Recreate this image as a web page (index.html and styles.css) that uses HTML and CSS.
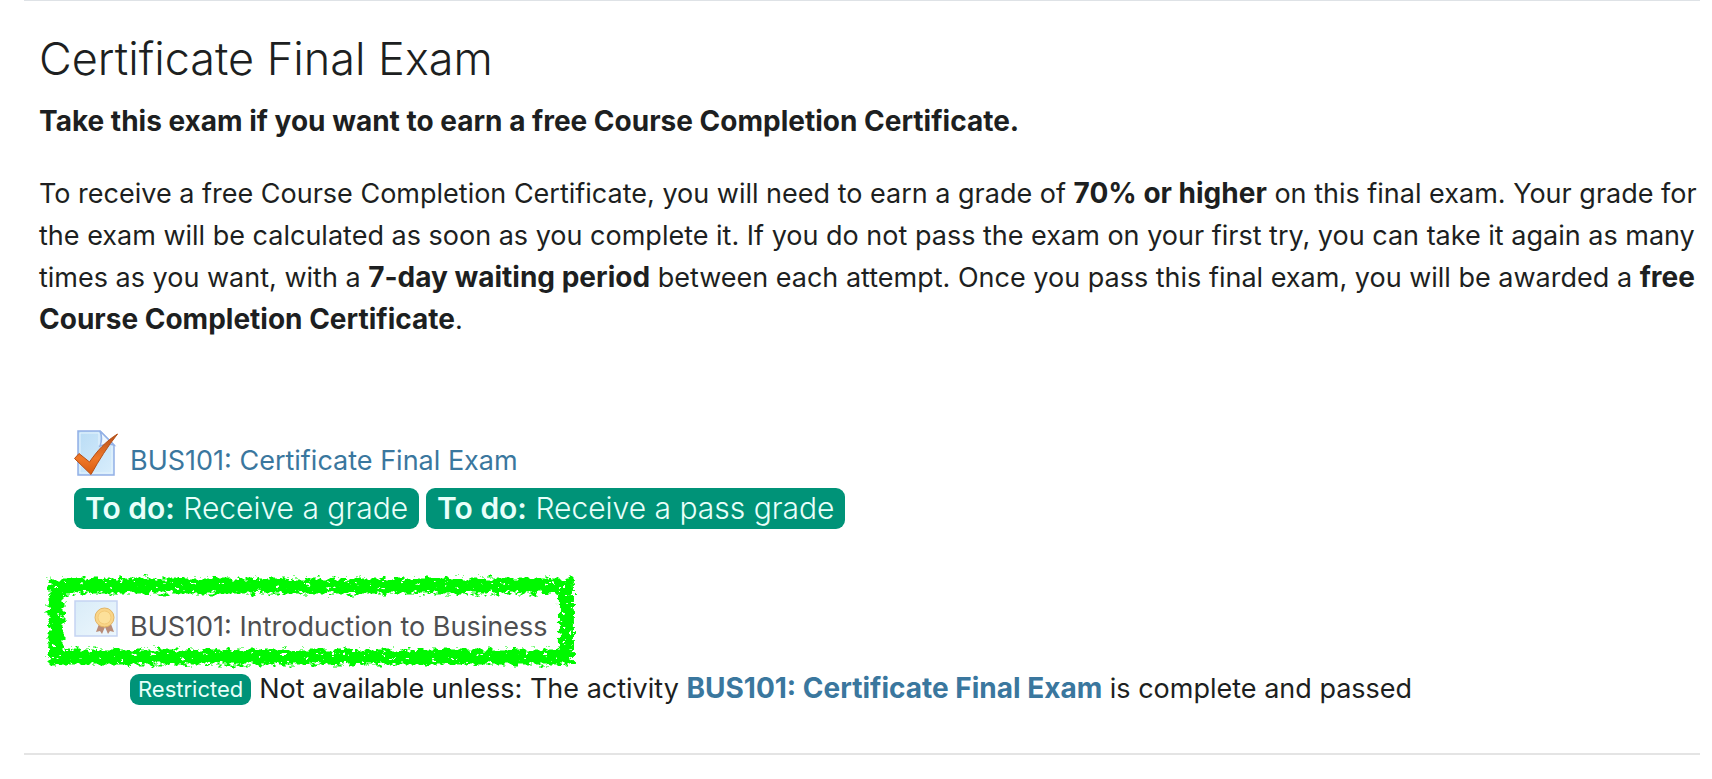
FILE: index.html
```
<!DOCTYPE html>
<html lang="en">
<head>
    <meta charset="UTF-8">
    <meta name="viewport" content="width=device-width, initial-scale=1.0">
    <title>Certificate Final Exam</title>
    <link rel="stylesheet" href="styles.css">
</head>
<body>
    <section class="section">
        <h2>Certificate Final Exam</h2>
        <p class="lead"><strong>Take this exam if you want to earn a free Course Completion Certificate.</strong></p>
        <p class="summary">To receive a free Course Completion Certificate, you will need to earn a grade of <strong>70% or higher</strong> on this final exam. Your grade for the exam will be calculated as soon as you complete it. If you do not pass the exam on your first try, you can take it again as many times as you want, with a <strong>7-day waiting period</strong> between each attempt. Once you pass this final exam, you will be awarded a <strong>free Course Completion Certificate</strong>.</p>

        <ul class="activities">
            <li class="activity">
                <div class="activity-row">
                    <svg class="icon" viewBox="0 0 44 48" aria-hidden="true">
                        <defs>
                            <linearGradient id="page" x1="0" y1="0" x2="1" y2="1">
                                <stop offset="0" stop-color="#b9dcf5"/>
                                <stop offset="1" stop-color="#d9eefc"/>
                            </linearGradient>
                            <linearGradient id="tick" x1="0" y1="0" x2="0" y2="1">
                                <stop offset="0" stop-color="#b5501c"/>
                                <stop offset="0.6" stop-color="#f07828"/>
                                <stop offset="1" stop-color="#d85a10"/>
                            </linearGradient>
                        </defs>
                        <path d="M4 2h22l14 14v30H4z" fill="url(#page)" stroke="#92b0e6" stroke-width="1.5"/>
                        <path d="M6 4h19v12h13v28H6z" fill="none" stroke="#e6f4fd"/>
                        <path d="M26 2c2 5 2 10 0 15 5-2 10-2 14-1z" fill="#eef7fe" stroke="#92b0e6" stroke-width="1.5"/>
                        <path d="M43.500 5C34 17 25 31 17 45.500L.5 29.500 5 24.500l10.500 8.500C23 22 32 12 43.500 5z" fill="url(#tick)" stroke="#b54f16" stroke-width="1"/>
                    </svg>
                    <a href="#">BUS101: Certificate Final Exam</a>
                </div>
                <div class="badges">
                    <span class="badge"><strong>To do:</strong> Receive a grade</span>
                    <span class="badge"><strong>To do:</strong> Receive a pass grade</span>
                </div>
            </li>
            <li class="activity">
                <div class="activity-row">
                    <svg class="icon" viewBox="0 0 44 48" aria-hidden="true">
                        <defs>
                            <linearGradient id="card" x1="0" y1="0" x2="1" y2="1">
                                <stop offset="0" stop-color="#d9ecf8"/>
                                <stop offset="1" stop-color="#edf7fd"/>
                            </linearGradient>
                        </defs>
                        <rect x="1" y="6" width="42" height="35" fill="url(#card)" stroke="#c5d3f2" stroke-width="1.5"/>
                        <path d="M25 29l-3 8 4-1 2 3 3-7 3 7 2-3 4 1-3-8z" fill="#b98c78"/>
                        <circle cx="30.500" cy="22.500" r="9.500" fill="#f9d588" stroke="#e3b565"/>
                        <circle cx="30.500" cy="22.500" r="6.500" fill="#fce09a" stroke="#f3ca78"/>
                    </svg>
                    <span class="dimmed">BUS101: Introduction to Business</span>
                    <svg class="marker" aria-hidden="true">
                        <filter id="rough" x="-5%" y="-20%" width="110%" height="140%">
                            <feTurbulence type="fractalNoise" baseFrequency="0.16 0.24" numOctaves="3" seed="4" result="noise"/>
                            <feDisplacementMap in="SourceGraphic" in2="noise" scale="12" xChannelSelector="R" yChannelSelector="G" result="edge"/>
                            <feColorMatrix in="noise" type="matrix" values="0 0 0 0 0  0 0 0 0 0  0 0 0 0 0  0 0 24 0 -17" result="specks"/>
                            <feComposite in="edge" in2="specks" operator="out"/>
                        </filter>
                        <rect x="0" y="0" width="100%" height="100%" filter="url(#rough)"/>
                    </svg>
                </div>
                <div class="restriction">
                    <span class="badge badge-small">Restricted</span>
                    <span>Not available unless: The activity <a href="#"><strong>BUS101: Certificate Final Exam</strong></a> is complete and passed</span>
                </div>
            </li>
        </ul>
    </section>
</body>
</html>
```
FILE: styles.css
```
body {
    margin: 0;
    background: #fff;
    color: #1d1f21;
    font-family: Inter, sans-serif;
    font-size: 27px;
    line-height: 42px;
}
a {
    color: #3a779e;
    text-decoration: none;
}
a:hover {
    text-decoration: underline;
}
strong {
    font-size: 28px;
    line-height: 1;
}
.section {
    margin: 0 12px 0 24px;
    padding: 30px 0 43px 15px;
    border-top: 1px solid #dee2e6;
    border-bottom: 2px solid #e4e4e4;
}
h2 {
    margin: 0;
    font-weight: 300;
    font-size: 45px;
    line-height: 56px;
}
.lead {
    margin: 14px 0 30px;
}
.summary {
    margin: 0;
}
.activities {
    margin: 88px 0 0;
    padding: 0 0 0 35px;
    list-style: none;
}
.activity + .activity {
    margin-top: 66px;
}
.activity-row {
    display: flex;
    align-items: flex-end;
    gap: 12px;
    width: fit-content;
    position: relative;
}
.icon {
    width: 44px;
    height: 48px;
    margin-bottom: 5px;
}
.badges {
    display: flex;
    flex-wrap: wrap;
    gap: 7px;
    margin-top: 6px;
}
.badge {
    padding: 0 11px;
    border-radius: 9px;
    background: #009378;
    color: #e9fffa;
    font-size: 30px;
    font-weight: 300;
    line-height: 41px;
}
.badge strong {
    font-size: 30px;
    font-weight: 600;
}
.badge-small {
    padding: 0 8px;
    font-size: 22px;
    font-weight: 400;
    line-height: 31px;
}
.dimmed {
    color: #4f4f51;
}
.marker {
    position: absolute;
    top: -9px;
    left: -18px;
    width: calc(100% + 37px);
    height: calc(100% + 18px);
    overflow: visible;
    pointer-events: none;
}
.marker rect {
    fill: none;
    stroke: #00f900;
    stroke-width: 15px;
}
.restriction {
    display: flex;
    align-items: center;
    gap: 8px;
    margin: 20px 0 0 56px;
}
```
